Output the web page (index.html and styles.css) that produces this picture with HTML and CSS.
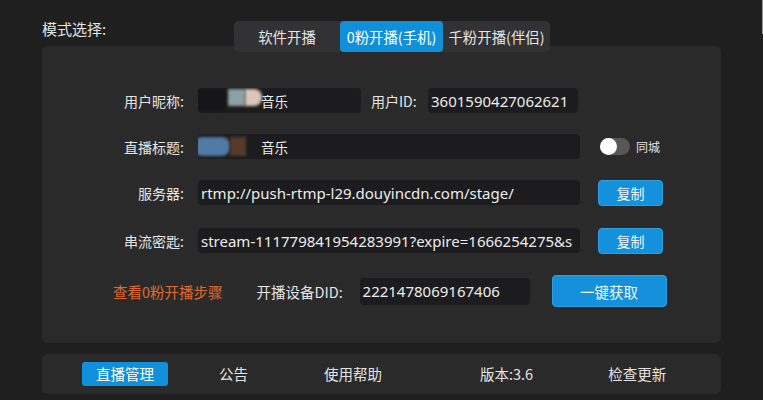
FILE: index.html
```html
<!DOCTYPE html>
<html lang="zh-CN">
<head>
<meta charset="UTF-8" />
<meta name="viewport" content="width=device-width, initial-scale=1.0" />
<title>开播工具</title>
<link rel="stylesheet" href="styles.css">
</head>
<body>
<div class="scrollEdge"></div>
<div class="app">
  <!-- 模式选择 -->
  <div class="header">
    <div class="modeLabel">模式选择:</div>
    <div class="modeTabs">
      <div class="modeTab">软件开播</div>
      <div class="modeTab active">0粉开播(手机)</div>
      <div class="modeTab">千粉开播(伴侣)</div>
    </div>
  </div>

  <!-- 主面板 -->
  <div class="panel">
    <div class="row">
      <div class="label">用户昵称:</div>
      <div class="field nick">
        <span class="blob blobDark"></span>
        <span class="blob blobTeal"></span>
        <span class="blob blobPeach"></span>
        <span class="fieldText masked">音乐</span>
      </div>
      <div class="label inline">用户ID:</div>
      <div class="field uid"><span class="fieldText">3601590427062621</span></div>
    </div>

    <div class="row">
      <div class="label">直播标题:</div>
      <div class="field wide">
        <span class="blob blobBlue"></span>
        <span class="blob blobBrown"></span>
        <span class="fieldText masked">音乐</span>
      </div>
      <div class="switch"><span class="knob"></span></div>
      <div class="switchText">同城</div>
    </div>

    <div class="row">
      <div class="label">服务器:</div>
      <div class="field wide"><span class="fieldText">rtmp://push-rtmp-l29.douyincdn.com/stage/</span></div>
      <button class="btn copy">复制</button>
    </div>

    <div class="row">
      <div class="label">串流密匙:</div>
      <div class="field wide"><span class="fieldText">stream-111779841954283991?expire=1666254275&amp;s</span></div>
      <button class="btn copy">复制</button>
    </div>

    <div class="row last">
      <a class="stepsLink">查看0粉开播步骤</a>
      <div class="didLabel">开播设备DID:</div>
      <div class="field did"><span class="fieldText">2221478069167406</span></div>
      <button class="btn fetch">一键获取</button>
    </div>
  </div>

  <!-- 底部导航 -->
  <div class="footer">
    <div class="navItem current">直播管理</div>
    <div class="navItem n1">公告</div>
    <div class="navItem n2">使用帮助</div>
    <div class="navItem n3">版本:3.6</div>
    <div class="navItem n4">检查更新</div>
  </div>
</div>
</body>
</html>
```

FILE: styles.css
```css
body {
  margin: 0;
  background-color: #1f1f1f;
  color: #e4e4e4;
  font-family: "Noto Sans CJK SC", "Noto Sans", sans-serif;
  font-size: 14px;
}
.scrollEdge {
  position: absolute;
  right: 0; top: 0;
  width: 1px; height: 34px;
  background: #9a9a9a;
}
.app {
  padding-left: 42px;
  width: 679px;
}

/* 模式选择 */
.header {
  display: flex;
  align-items: flex-start;
  padding-top: 19px;
  margin-bottom: -6px;
  position: relative;
  z-index: 1;
}
.modeLabel {
  width: 192px;
  font-size: 15px;
  line-height: 20px;
}
.modeTabs {
  display: flex;
  margin-top: 2px;
  height: 31px;
  background: #323235;
  border-radius: 5px;
}
.modeTab {
  display: flex; align-items: center; justify-content: center;
  width: 106px;
  font-size: 14.4px;
  border-radius: 4px;
}
.modeTab.active { width: 103px; background: #1090db; color: #fff; }
.modeTab:last-child { width: 107px; }

/* 主面板 */
.panel {
  height: 297px;
  box-sizing: border-box;
  padding-top: 42px;
  background: #2a2a2a;
  border-radius: 6px;
}
.row {
  display: flex;
  align-items: center;
  height: 25px;
  margin-bottom: 21px;
}
.row:nth-child(3) { margin-bottom: 23px; }
.row:nth-child(4) { margin-bottom: 22px; }
.row.last { height: 32px; margin-bottom: 0; }
.label {
  width: 142px;
  text-align: right;
  padding-right: 14px;
  font-size: 14px;
}
.label.inline { width: 57px; text-align: left; padding: 0 0 0 10px; }
.field {
  position: relative;
  height: 25px;
  box-sizing: border-box;
  background: #1c1c1e;
  border-radius: 4px;
  overflow: hidden;
  white-space: nowrap;
  display: flex; align-items: center;
  padding-left: 3px;
}
.fieldText { font-family: "Noto Sans", "Noto Sans CJK SC", sans-serif; font-size: 15px; color: #ececec; position: relative; }
.fieldText.masked { padding-left: 60px; font-family: "Noto Sans CJK SC", sans-serif; font-size: 13.5px; }
.nick { width: 163px; }
.uid { width: 150px; }
.wide { width: 382px; }
.did { width: 170px; height: 27px; }

/* 模糊遮挡 */
.blob { position: absolute; top: 1px; height: 17px; filter: blur(1.5px); }
.blobDark { left: -4px; width: 34px; height: 22px; background: #161618; border-radius: 8px; }
.blobTeal { left: 30px; width: 17px; background: #8ea1a4; z-index: 1; }
.blobPeach { left: 47px; width: 17px; background: #dac7b9; border-radius: 0 8px 8px 0; z-index: 1; }
.blobBlue { left: -4px; width: 36px; top: 3px; height: 19px; background: #5079a3; border-radius: 8px; }
.blobBrown { left: 32px; width: 16px; top: 3px; height: 19px; background: #573a2c; }

/* 同城开关 */
.switch {
  width: 30px; height: 17px;
  margin-left: 20px;
  background: #575757;
  border-radius: 9px;
  display: flex; align-items: center;
}
.knob { width: 17px; height: 17px; border-radius: 50%; background: #fff; }
.switchText { margin-left: 6px; font-size: 12px; }

/* 按钮 */
.btn {
  font-family: "Noto Sans CJK SC", sans-serif;
  color: #eef6fc;
  background: #1590da;
  border: 1px solid #2aa0e6;
  border-radius: 4px;
  padding: 0;
  cursor: pointer;
}
.copy { width: 65px; height: 26px; margin-left: 18px; font-size: 14px; }
.fetch { width: 115px; height: 32px; margin-left: 22px; font-size: 14.5px; }

.stepsLink { margin-left: 71px; color: #e06a2c; font-size: 14.5px; }
.didLabel { margin-left: 34px; width: 103px; font-size: 14.5px; }

/* 底部导航 */
.footer {
  display: flex;
  align-items: center;
  margin-top: 11px;
  height: 40px;
  background: #2a2a2a;
  border-radius: 6px;
  padding-left: 40px;
  font-size: 14.5px;
}
.navItem { line-height: 24px; }
.navItem.current { width: 86px; text-align: center; background: #1090db; color: #fff; border-radius: 3px; }
.n1 { margin-left: 51px; }
.n2 { margin-left: 76px; }
.n3 { margin-left: 98px; }
.n4 { margin-left: 75px; }
```
